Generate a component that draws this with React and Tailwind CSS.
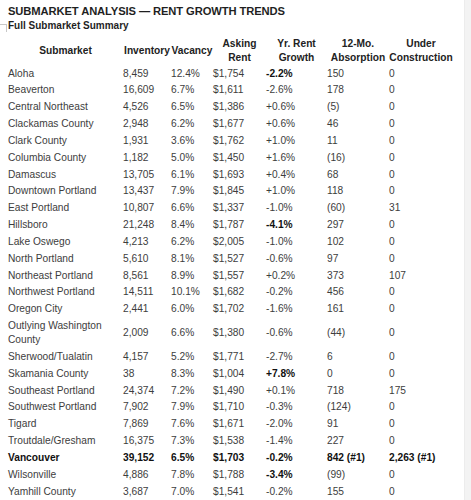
import React from 'react';

const rows = [
  ['Aloha', '8,459', '12.4%', '$1,754', '-2.2%', '150', '0', 'g'],
  ['Beaverton', '16,609', '6.7%', '$1,611', '-2.6%', '178', '0'],
  ['Central Northeast', '4,526', '6.5%', '$1,386', '+0.6%', '(5)', '0'],
  ['Clackamas County', '2,948', '6.2%', '$1,677', '+0.6%', '46', '0'],
  ['Clark County', '1,931', '3.6%', '$1,762', '+1.0%', '11', '0'],
  ['Columbia County', '1,182', '5.0%', '$1,450', '+1.6%', '(16)', '0'],
  ['Damascus', '13,705', '6.1%', '$1,693', '+0.4%', '68', '0'],
  ['Downtown Portland', '13,437', '7.9%', '$1,845', '+1.0%', '118', '0'],
  ['East Portland', '10,807', '6.6%', '$1,337', '-1.0%', '(60)', '31'],
  ['Hillsboro', '21,248', '8.4%', '$1,787', '-4.1%', '297', '0', 'g'],
  ['Lake Oswego', '4,213', '6.2%', '$2,005', '-1.0%', '102', '0'],
  ['North Portland', '5,610', '8.1%', '$1,527', '-0.6%', '97', '0'],
  ['Northeast Portland', '8,561', '8.9%', '$1,557', '+0.2%', '373', '107'],
  ['Northwest Portland', '14,511', '10.1%', '$1,682', '-0.2%', '456', '0'],
  ['Oregon City', '2,441', '6.0%', '$1,702', '-1.6%', '161', '0'],
  ['Outlying Washington County', '2,009', '6.6%', '$1,380', '-0.6%', '(44)', '0'],
  ['Sherwood/Tualatin', '4,157', '5.2%', '$1,771', '-2.7%', '6', '0'],
  ['Skamania County', '38', '8.3%', '$1,004', '+7.8%', '0', '0', 'g'],
  ['Southeast Portland', '24,374', '7.2%', '$1,490', '+0.1%', '718', '175'],
  ['Southwest Portland', '7,902', '7.9%', '$1,710', '-0.3%', '(124)', '0'],
  ['Tigard', '7,869', '7.6%', '$1,671', '-2.0%', '91', '0'],
  ['Troutdale/Gresham', '16,375', '7.3%', '$1,538', '-1.4%', '227', '0'],
  ['Vancouver', '39,152', '6.5%', '$1,703', '-0.2%', '842 (#1)', '2,263 (#1)', 'all'],
  ['Wilsonville', '4,886', '7.8%', '$1,788', '-3.4%', '(99)', '0', 'g'],
  ['Yamhill County', '3,687', '7.0%', '$1,541', '-0.2%', '155', '0'],
];

const headers = ['Submarket', 'Inventory', 'Vacancy', 'Asking Rent', 'Yr. Rent Growth', '12-Mo. Absorption', 'Under Construction'];

const cols = 'grid grid-cols-[115px_48px_42px_53px_61px_62px_64px]';

export default function App() {
  return (
    <div className="flex h-[500px] w-[471px] bg-white font-['Liberation_Sans',Arial,sans-serif] overflow-hidden">
      <div className="relative w-[464px] pl-[8px]">
        <div className="absolute left-0 top-[24px] h-[8px] w-[7px] border-t border-r border-[#c8c8c8]" />
        <h1 className="pt-[4px] text-[11.2px] font-bold leading-[14px] tracking-[-0.1px] text-[#1f1f1f]">SUBMARKET ANALYSIS — RENT GROWTH TRENDS</h1>
        <h2 className="pt-[1px] text-[10px] font-bold leading-[13px] text-[#1f1f1f]">Full Submarket Summary</h2>
        <div className={`${cols} mt-[5px] items-center text-[10.2px] font-bold leading-[14px] text-[#222]`}>
          {headers.map((h) => (
            <div key={h} className="text-center min-h-[28px] flex items-center justify-center">{h}</div>
          ))}
        </div>
        <div className="text-[10.2px] leading-[13.85px] text-[#3d3d3d]">
          {rows.map((r) => {
            const all = r[7] === 'all';
            return (
              <div key={r[0]} className={`${cols} items-center py-[1.5px] ${all ? 'font-bold text-[#111]' : ''}`}>
                <div className="pr-[8px]">{r[0]}</div>
                <div>{r[1]}</div>
                <div>{r[2]}</div>
                <div>{r[3]}</div>
                <div className={r[7] ? 'font-bold text-[#111]' : ''}>{r[4]}</div>
                <div>{r[5]}</div>
                <div>{r[6]}</div>
              </div>
            );
          })}
        </div>
      </div>
      <div className="w-[7px] h-full bg-[#f3f3f3] border-l border-[#ececec]" />
    </div>
  );
}
